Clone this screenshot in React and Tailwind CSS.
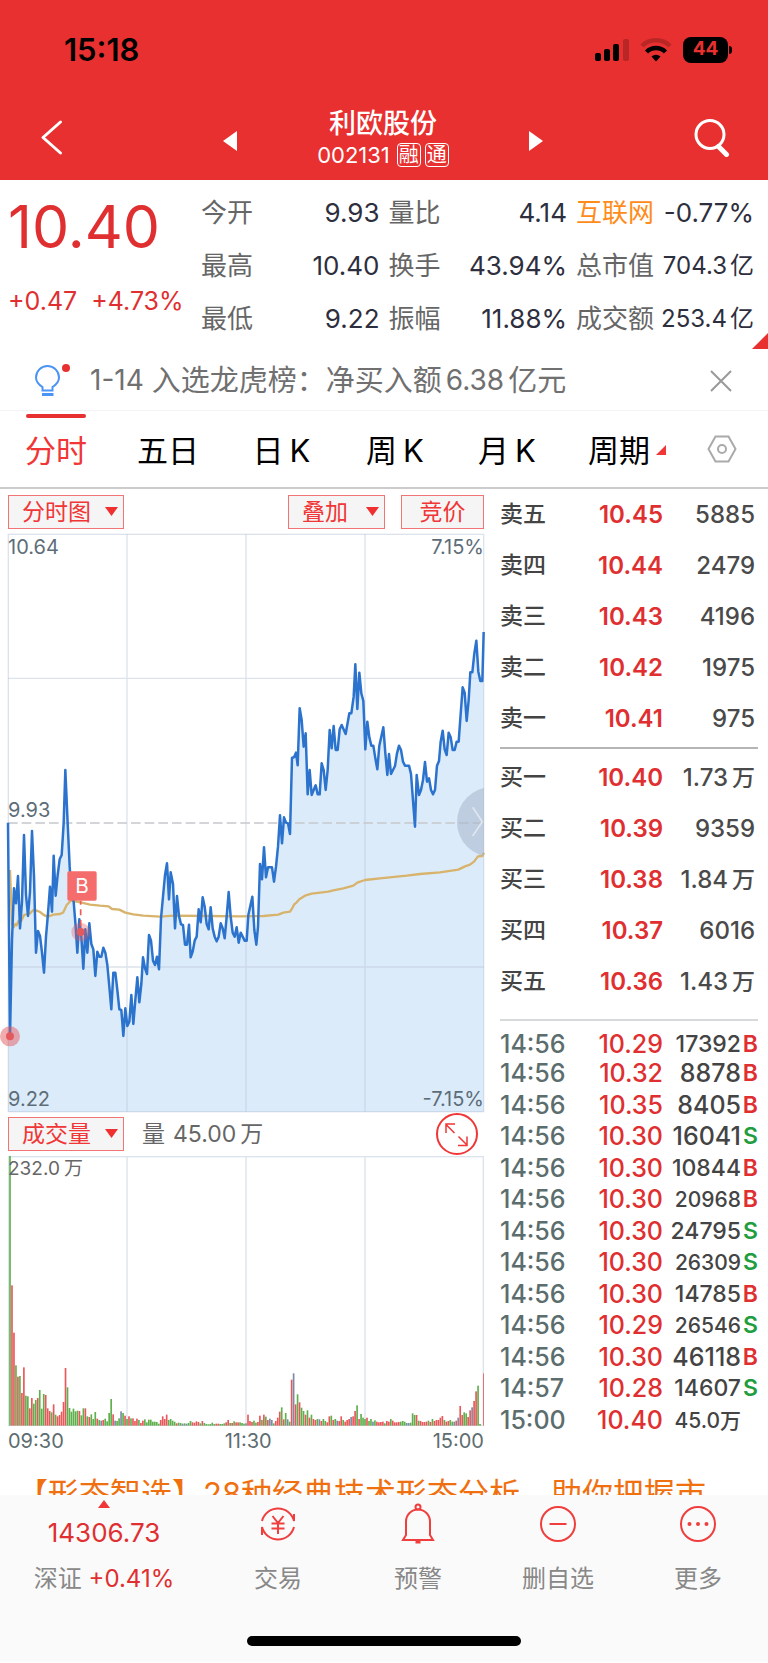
import { useState } from 'react'
import clsx from 'clsx'

const QUOTES = [
  ['今开', '9.93', '量比', '4.14', '互联网', '-0.77%'],
  ['最高', '10.40', '换手', '43.94%', '总市值', '704.3', '亿'],
  ['最低', '9.22', '振幅', '11.88%', '成交额', '253.4', '亿'],
]

const ASKS = [
  ['卖五', '10.45', '5885'],
  ['卖四', '10.44', '2479'],
  ['卖三', '10.43', '4196'],
  ['卖二', '10.42', '1975'],
  ['卖一', '10.41', '975'],
]

const BIDS = [
  ['买一', '10.40', '1.73', '万'],
  ['买二', '10.39', '9359'],
  ['买三', '10.38', '1.84', '万'],
  ['买四', '10.37', '6016'],
  ['买五', '10.36', '1.43', '万'],
]

// time, price, volume, side, size of the volume text
const TICKS = [
  ['14:56', '10.29', '17392', 'B', 'md'],
  ['14:56', '10.32', '8878', 'B', 'lg'],
  ['14:56', '10.35', '8405', 'B', 'lg'],
  ['14:56', '10.30', '16041', 'S', 'lg'],
  ['14:56', '10.30', '10844', 'B', 'md'],
  ['14:56', '10.30', '20968', 'B', 'sm'],
  ['14:56', '10.30', '24795', 'S', 'md'],
  ['14:56', '10.30', '26309', 'S', 'sm'],
  ['14:56', '10.30', '14785', 'B', 'md'],
  ['14:56', '10.29', '26546', 'S', 'sm'],
  ['14:56', '10.30', '46118', 'B', 'lg'],
  ['14:57', '10.28', '14607', 'S', 'md'],
  ['15:00', '10.40', '45.0万', '', 'sm'],
]

const TICK_SIZE = { lg: 'text-[25px]', md: 'text-[23px]', sm: 'text-[21px]' }

// Intraday price, one point a minute, in chart units (1428 x 1734)
const PRICE =
  '0,866 6,1506 12,1218 18,1063 24,1108 30,1026 36,1183 42,1103 48,903 54,1083 60,1146 66,1073 72,891 78,1028 84,1256 90,1191 96,1206 102,1256 108,1316 114,1208 120,1138 126,1058 132,1133 137,965 143,1085 149,1023 155,976 161,963 167,868 172,708 179,868 185,998 191,1083 197,1103 203,1178 208,1256 214,1156 220,1208 226,1304 232,1186 238,1256 244,1168 250,1230 256,1246 262,1326 268,1253 274,1268 280,1268 286,1241 292,1256 298,1293 304,1358 310,1426 316,1316 322,1316 328,1368 334,1426 340,1428 346,1506 352,1423 358,1476 364,1463 370,1383 376,1470 382,1398 388,1330 394,1405 400,1350 405,1270 411,1303 417,1320 423,1203 429,1220 435,1280 441,1293 447,1268 453,1306 459,1153 465,1088 471,1023 477,988 483,1096 488,1015 495,1050 501,1183 507,1086 513,1146 519,1171 525,1173 531,1232 537,1232 543,1172 548,1270 554,1253 560,1220 566,1208 572,1126 578,1165 584,1090 590,1118 596,1170 602,1186 608,1120 614,1183 620,1208 626,1222 632,1208 638,1168 644,1183 650,1213 656,1148 662,1074 668,1148 674,1196 680,1208 686,1180 692,1226 698,1196 710,1220 716,1220 721,1143 733,1088 739,1188 745,1232 750,1178 756,990 762,1036 768,940 774,1030 780,1000 792,1000 798,1043 804,998 810,938 816,844 822,928 828,850 834,866 840,868 846,900 852,671 858,670 864,656 869,694 875,523 881,558 887,638 893,598 899,781 905,708 911,783 917,768 923,754 929,781 935,781 941,688 947,708 953,768 959,708 965,588 971,643 977,576 983,648 989,648 995,586 1001,573 1013,600 1024,538 1030,538 1037,488 1042,391 1048,525 1054,416 1060,478 1066,501 1072,646 1078,563 1084,610 1090,635 1096,635 1102,673 1108,706 1114,635 1126,580 1132,658 1138,723 1143,660 1149,720 1161,696 1167,658 1173,635 1179,648 1185,683 1191,695 1203,695 1209,720 1215,800 1221,878 1226,723 1233,783 1239,768 1245,738 1251,684 1257,743 1263,733 1269,768 1275,781 1281,768 1287,695 1293,681 1298,623 1304,590 1310,646 1316,663 1322,596 1328,610 1334,648 1340,648 1346,623 1352,623 1358,540 1364,460 1370,476 1376,561 1382,498 1387,415 1393,415 1399,358 1405,320 1411,413 1417,441 1423,441 1427,294'

const AVERAGE =
  '6,1008 12,1170 17,1180 22,1170 26,1174 32,1160 40,1160 48,1143 66,1138 76,1128 86,1130 96,1134 106,1142 116,1147 126,1146 136,1142 156,1140 166,1135 176,1113 188,1100 221,1106 246,1112 276,1115 302,1117 312,1125 334,1127 352,1136 376,1141 406,1145 456,1148 496,1145 596,1146 696,1147 766,1146 811,1142 826,1136 846,1133 852,1124 858,1112 866,1105 874,1096 891,1085 911,1079 961,1073 976,1069 1006,1063 1036,1055 1048,1046 1071,1038 1116,1033 1196,1025 1236,1020 1296,1015 1351,1007 1371,997 1386,992 1398,983 1410,967 1423,966 1428,956'

// Volume bars: r = up, g = down, n = flat, followed by the bar's height
const VOLUME_AM =
  'g809 r421 r279 g181 r147 g149 r98 r175 g90 g88 r52 r83 g66 g77 r83 g107 g51 g95 r92 r52 r44 g40 r64 g33 r28 r32 r42 r71 r173 g115 g53 g42 g51 g43 g45 r44 g31 g52 r52 g28 r26 g34 g20 g41 r21 g17 n15 r17 g21 g13 g38 g80 r34 n15 g14 g22 n43 g38 r30 g20 r28 g22 r22 r14 r21 g17 r8 r15 g19 g10 g18 g18 g12 g12 g11 g6 r17 r28 r20 r33 g17 g20 g15 g12 r7 g9 g8 n6 g7 n6 g8 g14 r10 r9 r13 r11 g7 r14 g8 g5 g4 g5 g9 g5 r6 r6 g5 g5 g7 r10 r17 g8 r8 g13 r10 r10 g10 g8 g6 n7'
const VOLUME_PM =
  'r33 r14 r11 g15 g9 r11 r30 g17 r33 g27 r17 n21 n17 g7 r14 r24 r42 g55 r19 g38 n19 g12 r138 n157 r64 g94 r70 g54 g44 r33 g46 r24 g33 r20 r17 g20 n19 r14 g20 g14 r10 r28 g30 r17 g20 n15 r14 r28 g17 r12 r17 r20 n26 r28 r44 g61 r20 g35 g24 g20 r24 g14 g20 n12 g16 r12 r10 r11 r12 g7 r14 r12 g20 r15 r10 r10 r11 g12 g14 g12 n8 n8 g9 g37 g32 r32 g15 r14 r11 r11 r12 g15 r11 g20 r14 r17 r17 r24 r29 g17 r12 r14 g17 g12 n12 r15 n24 r59 r32 g40 g37 r26 r46 n55 r74 r103 g120 g5 g0 r157'

const BAR_FILL = { r: '#e8585a', g: '#5fb04c', n: '#7a8ba3' }

const parseBars = (list, start) =>
  list.split(' ').map((s, i) => ({ x: start + i * 5.95, h: Number(s.slice(1)), fill: BAR_FILL[s[0]] }))

const BARS = [...parseBars(VOLUME_AM, 6), ...parseBars(VOLUME_PM, 720)]

function StatusBar() {
  return (
    <div className="flex h-[99px] items-center justify-between pl-[64px] pr-[36px] text-black">
      <span className="text-[31px] font-semibold leading-none">15:18</span>
      <div className="flex items-center gap-[11px]">
        <svg width="34" height="24" viewBox="0 0 34 24">
          <rect x="0" y="15" width="6" height="8" rx="2" />
          <rect x="9" y="11" width="6" height="12" rx="2" />
          <rect x="18" y="6" width="6" height="17" rx="2" />
          <rect x="28" y="1" width="6" height="22" rx="2" opacity="0.2" />
        </svg>
        <svg width="32" height="24" viewBox="0 0 32 24" fill="none" stroke="#000" strokeWidth="4.5">
          <path d="M2 8a20 20 0 0 1 28 0" opacity="0.2" />
          <path d="M6.500 14a13.500 13.500 0 0 1 19 0" />
          <path d="M11.500 18.500a7 7 0 0 1 9 0L16 23.500z" fill="#000" stroke="none" />
        </svg>
        <div className="flex items-center gap-px">
          <span className="flex h-[26px] w-[45px] items-center justify-center rounded-[8px] bg-black text-[19px] font-bold text-[#e83030]">
            44
          </span>
          <span className="h-2 w-[3px] rounded-r-full bg-black" />
        </div>
      </div>
    </div>
  )
}

function TitleBar() {
  return (
    <div className="flex h-[81px] items-center justify-between pb-[4px] pl-[40px] pr-[38px] text-white">
      <button aria-label="返回">
        <svg className="block" width="24" height="38" viewBox="0 0 24 38" fill="none" stroke="currentColor" strokeWidth="3" strokeLinecap="round" strokeLinejoin="round">
          <path d="M20.500 3L3 18.500L20.500 34" />
        </svg>
      </button>
      <div className="ml-2 flex items-center gap-[78px]">
        <button aria-label="上一只" className="pt-[6px]">
          <svg className="block" width="14" height="20" viewBox="0 0 14 20" fill="currentColor">
            <path d="M14 0v20L0 10z" />
          </svg>
        </button>
        <div className="flex w-[136px] flex-col items-center gap-[2px]">
          <h1 className="text-[27px] font-medium leading-[32px]">利欧股份</h1>
          <div className="flex items-center gap-1 text-[22px] leading-[26px]">
            <span className="mr-[3px]">002131</span>
            <span className="flex h-6 w-6 items-center justify-center rounded-[4px] border border-white text-[20px]">融</span>
            <span className="flex h-6 w-6 items-center justify-center rounded-[4px] border border-white text-[20px]">通</span>
          </div>
        </div>
        <button aria-label="下一只" className="pt-[6px]">
          <svg className="block" width="14" height="20" viewBox="0 0 14 20" fill="currentColor">
            <path d="M0 0v20L14 10z" />
          </svg>
        </button>
      </div>
      <button aria-label="搜索">
        <svg className="block" width="36" height="38" viewBox="0 0 36 38" fill="none" stroke="currentColor" strokeLinecap="round">
          <circle cx="16" cy="15.500" r="14" strokeWidth="3" />
          <path d="M24.500 27.500l8 8" strokeWidth="5" />
        </svg>
      </button>
    </div>
  )
}

function QuotePanel() {
  return (
    <section className="relative flex h-[171px] pl-2 pr-[14px] pt-[6px]">
      <div className="w-[193px] shrink-0 text-[#e02f30]">
        <div className="mt-[6px] text-[59px] leading-[70px]">10.40</div>
        <div className="mt-[24px] flex gap-[14px] whitespace-nowrap text-[25px] leading-[30px]">
          <span>+0.47</span>
          <span>+4.73%</span>
        </div>
      </div>
      <dl className="flex-1 text-[26px] text-[#2e2f3e]">
        {QUOTES.map(([a, av, b, bv, c, cv, unit], i) => (
          <div key={a} className="flex h-[53px] items-center whitespace-nowrap">
            <dt className="w-[60px] text-[#666]">{a}</dt>
            <dd className="flex-1 text-right">{av}</dd>
            <dt className="ml-[9px] w-[60px] text-[#666]">{b}</dt>
            <dd className="flex-1 text-right">{bv}</dd>
            <dt className={clsx('ml-[9px] w-[80px]', i === 0 ? 'text-[#ff8c1a]' : 'text-[#666]')}>{c}</dt>
            <dd className={clsx('w-[98px] text-right', i > 0 && 'text-[24px]')}>
              {cv}
              {unit && <span className="ml-[3px]">{unit}</span>}
            </dd>
          </div>
        ))}
      </dl>
      <svg className="absolute bottom-[2px] right-0" width="16" height="16" viewBox="0 0 16 16">
        <path d="M16 0v16H0z" fill="#e83030" />
      </svg>
    </section>
  )
}

function Notice() {
  return (
    <div className="flex h-[59px] items-center pl-[34px] pr-[36px]">
      <svg width="38" height="34" viewBox="0 0 38 34" fill="none" stroke="#4a94f5" strokeWidth="2">
        <path d="M8.500 26.500v-3.500C4.500 20.500 2 17 2 13.500a11.500 11.500 0 0 1 23 0c0 3.500-2.500 7-6.500 9.500v3.500z" />
        <path d="M8 30.500h11.500" strokeWidth="3" />
        <circle cx="32" cy="4" r="4" fill="#e83030" stroke="none" />
      </svg>
      <p className="ml-[18px] flex flex-1 gap-1 whitespace-nowrap text-[28px] text-[#707070]">
        <span>1-14</span>
        <span className="ml-1 text-[29px]">入选龙虎榜：净买入额</span>
        <span>6.38</span>
        <span className="text-[29px]">亿元</span>
      </p>
      <button aria-label="关闭">
        <svg className="block" width="22" height="22" viewBox="0 0 22 22" stroke="#999" strokeWidth="2">
          <path d="M1 1l20 20M21 1L1 21" />
        </svg>
      </button>
    </div>
  )
}

const TABS = [['分时'], ['五日'], ['日', 'K'], ['周', 'K'], ['月', 'K'], ['周期']]

function Tabs() {
  const [active, setActive] = useState(0)
  return (
    <nav
      role="tablist"
      className="grid h-[79px] grid-cols-[112fr_112fr_115fr_112fr_112fr_128fr_77fr] border-b-2 border-t border-b-[#ccc] border-t-[#f4f4f4]"
    >
      {TABS.map(([label, k], i) => (
        <button
          key={i}
          role="tab"
          aria-selected={i === active}
          onClick={() => setActive(i)}
          className={clsx('flex flex-col items-center pb-[5px] pt-[3px]', i === active ? 'text-[#f03636]' : 'text-black')}
        >
          <span className={clsx('h-1 w-[60px] rounded-full', i === active && 'bg-[#e83030]')} />
          <span className="flex flex-1 items-center gap-[6px] text-[31px] leading-none">
            {label}
            {k && <span>{k}</span>}
            {label === '周期' && (
              <svg width="10" height="10" viewBox="0 0 10 10">
                <path d="M10 0v10H0z" fill="#f03636" />
              </svg>
            )}
          </span>
        </button>
      ))}
      <button aria-label="设置" className="flex items-center justify-center pr-[16px]">
        <svg width="30" height="28" viewBox="0 0 30 28" fill="none" stroke="#aaa" strokeWidth="2">
          <path d="M8.500 1.500h13L28.500 14l-7 12.500h-13L1.500 14z" />
          <circle cx="15" cy="14" r="4" />
        </svg>
      </button>
    </nav>
  )
}

function Picker({ label, value, className }) {
  return (
    <div className={clsx('relative', className)}>
      <select
        aria-label={label}
        className="block h-[34px] w-full appearance-none border border-[#f27575] bg-[#f5f5f5] text-[23px] leading-none text-[#f03636] [padding-inline:13px]"
      >
        <option>{value}</option>
      </select>
      <svg className="pointer-events-none absolute right-[6px] top-[12px]" width="13" height="10" viewBox="0 0 13 10">
        <path d="M0 0h13L6.500 9z" fill="#f03030" />
      </svg>
    </div>
  )
}

function PriceChart() {
  return (
    <div className="relative text-[20px] leading-[26px] text-[#5d6d78]">
      <svg className="block w-full overflow-visible" viewBox="0 0 1428 1734" fill="none">
        <defs>
          <clipPath id="plot">
            <rect x="0" y="0" width="1428" height="1734" />
          </clipPath>
        </defs>
        <polygon points={`0,1734 ${PRICE} 1427,1734`} fill="#dcebfa" />
        <g stroke="#b9c8dc" strokeOpacity="0.5" strokeWidth="4">
          <rect x="1" y="1" width="1426" height="1732" />
          <path d="M357 0v1734M714 0v1734M1071 0v1734M0 433h1428M0 1299h1428" />
        </g>
        <path d="M0 867h1428" stroke="#c6c8cb" strokeWidth="5" strokeDasharray="29 12" />
        <polyline points={AVERAGE} stroke="#d8b36c" strokeWidth="7" strokeLinejoin="round" />
        <polyline points={PRICE} stroke="#2b73cd" strokeWidth="7.5" strokeLinejoin="round" />

        {/* buy markers */}
        <path d="M218 1100v94" stroke="#ee5a5a" strokeWidth="5" strokeDasharray="18 14" strokeDashoffset="6" />
        <g fill="#e35a5e">
          <circle cx="6" cy="1507" r="30" fillOpacity="0.5" />
          <circle cx="6" cy="1507" r="12" />
          <circle cx="218" cy="1194" r="28" fillOpacity="0.35" />
          <circle cx="218" cy="1194" r="12" />
        </g>
        <rect x="178" y="1012" width="88" height="88" rx="5" fill="#f56c6c" />
        <text x="222" y="1078" textAnchor="middle" fontSize="62" fill="#fff">
          B
        </text>

        {/* side handle */}
        <g clipPath="url(#plot)">
          <circle cx="1452" cy="864" r="105" fill="#a5b5cb" fillOpacity="0.55" />
          <path d="M1394 820l29 43l-29 43" stroke="#dfe6ef" strokeWidth="5" />
        </g>
      </svg>
      <span className="absolute left-0 top-0">10.64</span>
      <span className="absolute right-0 top-0">7.15%</span>
      <span className="absolute bottom-1/2 left-0">9.93</span>
      <span className="absolute bottom-0 left-0">9.22</span>
      <span className="absolute bottom-0 right-0">-7.15%</span>
    </div>
  )
}

function VolumeChart() {
  return (
    <div>
      <div className="relative">
        <svg className="block w-full" viewBox="0 0 1428 810" fill="none">
          <g stroke="#dbe3ed" strokeWidth="4">
            <rect x="1" y="2" width="1425" height="806" />
            <path d="M357 0v810M714 0v810M1071 0v810" />
          </g>
          {BARS.map((b) => (
            <rect key={b.x} x={b.x - 2.5} y={809 - b.h} width="5" height={b.h} fill={b.fill} />
          ))}
        </svg>
        <span className="absolute left-0 top-0 flex gap-1 text-[19px] leading-[26px] text-[#666]">
          232.0<span>万</span>
        </span>
      </div>
      <div className="flex h-[30px] items-center justify-between text-[20px] text-[#5d6d70]">
        <span>09:30</span>
        <span>11:30</span>
        <span>15:00</span>
      </div>
    </div>
  )
}

function Levels({ rows }) {
  return (
    <table className="w-full table-fixed text-[24px] font-semibold leading-none">
      <tbody>
        {rows.map(([name, price, vol, unit]) => (
          <tr key={name} className="h-[51px]">
            <th scope="row" className="w-[80px] text-left text-[23px] font-medium text-[#444]">{name}</th>
            <td className="w-[83px] text-right text-[#e02f30]">{price}</td>
            <td className="pr-[3px] text-right font-medium text-[#4a4a4a]">
              {vol}
              {unit && <span className="ml-1 text-[23px]">{unit}</span>}
            </td>
          </tr>
        ))}
      </tbody>
    </table>
  )
}

function Trades() {
  return (
    <table className="h-[405px] w-full table-fixed text-[25px] font-medium leading-none">
      <tbody>
        {TICKS.map(([time, price, vol, side, size], i) => (
          <tr key={i} className={i === 0 ? 'h-[27px]' : ''}>
            <td className="w-[80px] text-[#5b6d6d]">{time}</td>
            <td className="w-[83px] text-right text-[#e02f30]">{price}</td>
            <td className={clsx('text-right text-[#444]', TICK_SIZE[size])}>{vol}</td>
            <td
              className={clsx(
                'w-[17px] text-right text-[23px] font-semibold',
                side === 'B' ? 'text-[#e02f30]' : 'text-[#1f9d3f]',
              )}
            >
              {side}
            </td>
          </tr>
        ))}
      </tbody>
    </table>
  )
}

const ACTIONS = [
  {
    label: '交易',
    icon: (
      <>
        <path d="M2 15A16.500 16.500 0 0 1 34 15V8M34 21A16.500 16.500 0 0 1 2 21v8" />
        <path d="M12.500 10l5.500 7l5.500-7M18 17v11M11.500 17.500h13M11.500 22.500h13" />
      </>
    ),
  },
  {
    label: '预警',
    icon: (
      <>
        <circle cx="18" cy="1" r="2.500" />
        <path d="M6 29V15.500a12 12 0 0 1 24 0V29l3 5H3l3-5z" />
        <path d="M15.500 36h5" strokeWidth="3" />
      </>
    ),
  },
  {
    label: '删自选',
    icon: (
      <>
        <circle cx="18" cy="18" r="17" />
        <path d="M9.500 18h17" />
      </>
    ),
  },
  {
    label: '更多',
    icon: (
      <>
        <circle cx="18" cy="18" r="17" />
        <path d="M9.500 18h.01M18 18h.01M26.500 18h.01" strokeWidth="4" strokeLinecap="round" />
      </>
    ),
  },
]

function BottomBar() {
  return (
    <footer className="bg-[#fafafa]">
      <div className="grid h-[141px] grid-cols-[208fr_140fr_140fr_140fr_140fr] text-[24px] leading-[30px] text-[#888]">
        <a href="#index" className="flex flex-col items-center pt-[5px]">
          <svg width="12" height="8" viewBox="0 0 12 8">
            <path d="M6 0l6 8H0z" fill="#f03636" />
          </svg>
          <span className="mt-[10px] text-[26px] text-[#e02f30]">14306.73</span>
          <span className="mt-4 whitespace-nowrap">
            深证 <span className="text-[#e02f30]">+0.41%</span>
          </span>
        </a>
        {ACTIONS.map(({ label, icon }) => (
          <button key={label} className="flex flex-col items-center pt-[11px]">
            <svg className="overflow-visible" width="36" height="36" viewBox="0 0 36 36" fill="none" stroke="#f03e3e" strokeWidth="2">
              {icon}
            </svg>
            <span className="mt-[22px]">{label}</span>
          </button>
        ))}
      </div>
      <div className="flex h-[26px] justify-center">
        <span className="h-[10px] w-[274px] rounded-full bg-black" />
      </div>
    </footer>
  )
}

export default function App() {
  return (
    <div className="bg-white font-['Inter','Noto_Sans_CJK_SC',sans-serif]">
      <header className="bg-[#e83030]">
        <StatusBar />
        <TitleBar />
      </header>
      <QuotePanel />
      <Notice />
      <Tabs />

      <main className="flex gap-4 pl-2 pr-[10px]">
        <div className="flex-1 pt-[6px]">
          <div className="mb-[5px] flex items-center">
            <Picker label="图表" value="分时图" className="w-[116px]" />
            <Picker label="叠加指标" value="叠加" className="ml-auto w-[97px]" />
            <button className="ml-4 h-[34px] w-[83px] border border-[#f27575] bg-[#f5f5f5] text-[23px] leading-none text-[#f03636]">
              竞价
            </button>
          </div>
          <PriceChart />
          <div className="my-[5px] flex items-center">
            <Picker label="指标" value="成交量" className="w-[116px]" />
            <span className="ml-[18px] flex gap-2 text-[23px] leading-none text-[#666]">
              量
              <span className="flex gap-1">
                45.00<span>万</span>
              </span>
            </span>
            <button aria-label="放大" className="-my-1 ml-auto mr-[6px]">
              <svg className="block" width="42" height="42" viewBox="0 0 42 42" fill="none" stroke="#f03636" strokeWidth="2">
                <circle cx="21" cy="21" r="20" />
                <path d="M18.500 20L10 11.500M10 20v-9h9M22.500 23.500L31 32M31 23.500v9h-9" strokeWidth="1.500" />
              </svg>
            </button>
          </div>
          <VolumeChart />
        </div>

        <aside className="w-[258px] shrink-0">
          <Levels rows={ASKS} />
          <hr className="my-[3px] border-t-2 border-[#b5b5b5]" />
          <Levels rows={BIDS} />
          <hr className="mb-[10px] mt-[12px] border-t-2 border-[#d6dada]" />
          <Trades />
        </aside>
      </main>

      <div className="mt-[18px] h-[21px] overflow-hidden pl-[17px]">
        <a href="#promo" className="block whitespace-nowrap text-[31px] leading-[40px] text-[#f07010]">
          【形态智选】28种经典技术形态分析，助你把握市
        </a>
      </div>
      <BottomBar />
    </div>
  )
}
